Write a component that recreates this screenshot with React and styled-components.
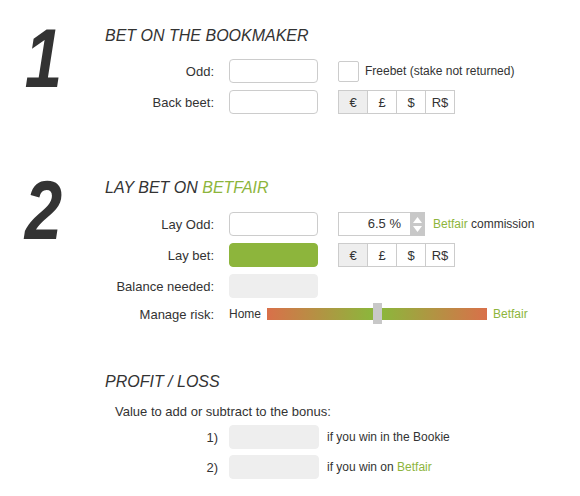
import React, { useState } from 'react'
import styled, { createGlobalStyle } from 'styled-components'

const GREEN = '#8db53c'

const GlobalStyle = createGlobalStyle`
  body {
    margin: 0;
    background: #fff;
    font-family: "Liberation Sans", Arial, sans-serif;
    color: #333;
  }
`

const Page = styled.div`
  width: 580px;
  padding-top: 27px;
`

const Section = styled.section`
  display: grid;
  grid-template-columns: 105px 1fr;
  margin-top: ${p => p.$top || 0}px;
`

const Numeral = styled.div`
  font-size: 84px;
  font-weight: bold;
  font-style: italic;
  line-height: 1;
  color: #333;
  width: 47px;
  text-align: center;
  margin-left: ${p => p.$pad || 20}px;
  margin-top: -11px;
  transform: scaleX(0.8);
`

const Content = styled.div`
  display: flex;
  flex-direction: column;
`

const Heading = styled.h2`
  margin: 0 0 ${p => p.$gap || 14}px;
  font-size: 16px;
  line-height: 18px;
  font-weight: normal;
  font-style: italic;
  text-transform: uppercase;
  color: #333;
`

const Green = styled.span`
  color: ${GREEN};
`

const Rows = styled.div`
  display: flex;
  flex-direction: column;
  gap: ${p => p.$gap || 7}px;
`

const Row = styled.div`
  display: flex;
  align-items: center;
  height: 24px;
  font-size: 12px;
  margin-top: ${p => p.$shift || 0}px;
`

const Label = styled.label`
  width: 109px;
  margin-right: 15px;
  text-align: right;
  font-size: 13px;
`

const Input = styled.input`
  box-sizing: border-box;
  width: 89px;
  height: 24px;
  border: 1px solid ${p => (p.$variant === 'green' ? GREEN : p.$variant === 'gray' ? '#eee' : '#ccc')};
  border-radius: 4px;
  background: ${p => (p.$variant === 'green' ? GREEN : p.$variant === 'gray' ? '#eee' : '#fff')};
  margin-right: 20px;
  font: inherit;
  padding: 0 6px;
  outline: none;
`

const CheckBox = styled.span`
  box-sizing: border-box;
  width: 21px;
  height: 21px;
  border: 1px solid #ccc;
  border-radius: 2px;
  margin-right: 6px;
`

const Currency = styled.div`
  display: flex;
  height: 24px;
`

const CurrencyBtn = styled.button`
  box-sizing: border-box;
  width: 30px;
  height: 24px;
  border: 1px solid #ccc;
  margin-left: ${p => (p.$first ? 0 : -1)}px;
  background: ${p => (p.$active ? '#eee' : '#fff')};
  color: #333;
  font: 13px "Liberation Sans", Arial, sans-serif;
  padding: 0;
  cursor: pointer;
`

const Spin = styled.div`
  display: flex;
  height: 24px;
  margin-right: 8px;
`

const SpinInput = styled.div`
  box-sizing: border-box;
  width: 72px;
  height: 24px;
  border: 1px solid #ccc;
  border-right: none;
  text-align: right;
  padding-right: 9px;
  line-height: 22px;
  font-size: 13px;
`

const SpinArrows = styled.div`
  width: 15px;
  background: #c8c8c8;
  display: flex;
  flex-direction: column;
  align-items: center;
  justify-content: center;
  gap: 3px;
`

const Risk = styled.div`
  display: flex;
  align-items: center;
  gap: 6px;
`

const Track = styled.div`
  position: relative;
  width: 220px;
  height: 12px;
  background: linear-gradient(to right, #d9704a, ${GREEN} 47%, ${GREEN} 53%, #d9704a);
`

const Thumb = styled.span`
  position: absolute;
  top: -5px;
  width: 9px;
  height: 21px;
  background: #c8c8c8;
`

const Intro = styled.p`
  margin: 0 0 6px 10px;
  font-size: 13px;
  line-height: 15px;
`

const NumLabel = styled.span`
  width: 113px;
  margin-right: 11px;
  text-align: right;
  font-size: 13px;
`

const ResultInput = styled(Input)`
  width: 90px;
  margin-right: 8px;
`

function Currencies() {
  const [cur, setCur] = useState('€')
  return (
    <Currency>
      {['€', '£', '$', 'R$'].map((c, i) => (
        <CurrencyBtn key={c} $first={i === 0} $active={cur === c} onClick={() => setCur(c)}>
          {c}
        </CurrencyBtn>
      ))}
    </Currency>
  )
}

export default function App() {
  const [risk] = useState(106)
  return (
    <Page>
      <GlobalStyle />
      <Section>
        <Numeral $pad={20}>1</Numeral>
        <Content>
          <Heading>Bet on the bookmaker</Heading>
          <Rows>
            <Row>
              <Label>Odd:</Label>
              <Input />
              <CheckBox />
              Freebet (stake not returned)
            </Row>
            <Row>
              <Label>Back beet:</Label>
              <Input />
              <Currencies />
            </Row>
          </Rows>
        </Content>
      </Section>

      <Section $top={65}>
        <Numeral $pad={20}>2</Numeral>
        <Content>
          <Heading $gap={15}>
            Lay bet on <Green>Betfair</Green>
          </Heading>
          <Rows>
            <Row>
              <Label>Lay Odd:</Label>
              <Input />
              <Spin>
                <SpinInput>6.5 %</SpinInput>
                <SpinArrows>
                  <svg width="9" height="6" viewBox="0 0 9 6"><path d="M4.5 0L9 6H0z" fill="#fff" /></svg>
                  <svg width="9" height="6" viewBox="0 0 9 6"><path d="M0 0h9L4.5 6z" fill="#fff" /></svg>
                </SpinArrows>
              </Spin>
              <Green>Betfair</Green>&nbsp;commission
            </Row>
            <Row>
              <Label>Lay bet:</Label>
              <Input $variant="green" />
              <Currencies />
            </Row>
            <Row>
              <Label>Balance needed:</Label>
              <Input $variant="gray" readOnly />
            </Row>
            <Row $shift={-3}>
              <Label>Manage risk:</Label>
              <Risk>
                <span>Home</span>
                <Track>
                  <Thumb style={{ left: risk }} />
                </Track>
                <Green>Betfair</Green>
              </Risk>
            </Row>
          </Rows>
        </Content>
      </Section>

      <Section $top={47}>
        <div />
        <Content>
          <Heading $gap={13}>Profit / Loss</Heading>
          <Intro>Value to add or subtract to the bonus:</Intro>
          <Rows $gap={6}>
            <Row>
              <NumLabel>1)</NumLabel>
              <ResultInput $variant="gray" readOnly />
              if you win in the Bookie
            </Row>
            <Row>
              <NumLabel>2)</NumLabel>
              <ResultInput $variant="gray" readOnly />
              if you win on&nbsp;<Green>Betfair</Green>
            </Row>
          </Rows>
        </Content>
      </Section>
    </Page>
  )
}
